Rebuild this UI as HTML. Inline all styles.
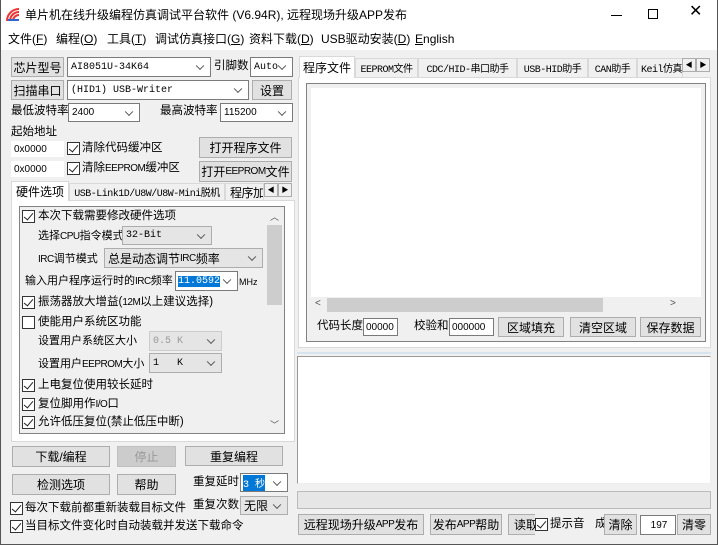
<!DOCTYPE html>
<html><head><meta charset="utf-8"><style>
*{box-sizing:border-box;margin:0;padding:0}
body{width:718px;height:545px;overflow:hidden;background:#f0f0f0;font-family:"Liberation Sans","Noto Sans CJK SC",sans-serif;font-size:11px;color:#000;position:relative}
.a{position:absolute;white-space:nowrap;line-height:1}
.m{font-size:11.5px}
.l{font-size:10px;letter-spacing:-0.5px;font-family:"Liberation Sans",sans-serif}
.btn{position:absolute;background:#e1e1e1;border:1px solid #adadad;display:flex;align-items:center;justify-content:center;white-space:nowrap;font-size:12px;overflow:hidden}
.cb{position:absolute;background:#fff;border:1px solid #7a7a7a;font-family:"Liberation Mono","Noto Sans CJK SC",monospace;font-size:10px;padding-left:3px;display:flex;align-items:center;white-space:nowrap}
.cb.g{background:#e5e5e5;border-color:#adadad}
.cb:after{content:"";position:absolute;right:7px;top:50%;width:5px;height:5px;border-right:1px solid #555;border-bottom:1px solid #555;transform:translateY(-70%) rotate(45deg)}
.ed{position:absolute;background:#fff;border:1px solid #7a7a7a;font-size:10px;padding-left:2px;display:flex;align-items:center;white-space:nowrap}
.ck{position:absolute;width:13px;height:13px;border:1px solid #333;background:#fff}
.ck.on:after{content:"";position:absolute;left:3px;top:0px;width:4px;height:8px;border-right:1.5px solid #222;border-bottom:1.5px solid #222;transform:rotate(40deg)}
.tab{position:absolute;border:1px solid #d9d9d9;border-bottom:none;background:#f0f0f0;font-size:10px;display:flex;align-items:center;justify-content:center;white-space:nowrap;overflow:hidden;font-family:"Liberation Mono","Noto Sans CJK SC",monospace;letter-spacing:-0.5px}
.tab.s{background:#fff;font-family:"Liberation Sans","Noto Sans CJK SC",sans-serif;font-size:12px;letter-spacing:0}
.ar{position:absolute;width:14px;height:14px;border:1px solid #adadad;background:#f0f0f0;font-size:7px;display:flex;align-items:center;justify-content:center}
</style></head><body>
<div class="a" style="left:0;top:0;width:718px;height:50px;background:#fff"></div>
<div class="a" style="left:0;top:0;width:1px;height:545px;background:#555"></div>
<div class="a" style="left:717px;top:0;width:1px;height:545px;background:#555"></div>
<div class="a" style="left:0;top:544px;width:718px;height:1px;background:#555"></div>
<svg class="a" style="left:6px;top:8px" width="14" height="14"><path d="M1 13 A12 12 0 0 1 13 1" stroke="#e33" stroke-width="2" fill="none"/><path d="M4 13 A9 9 0 0 1 13 4" stroke="#e33" stroke-width="2" fill="none"/><path d="M7 13 A6 6 0 0 1 13 7" stroke="#e33" stroke-width="2" fill="none"/><rect x="2" y="11" width="11" height="2" fill="#36c"/></svg>
<div class="a" style="left:25px;top:9px;font-size:12px">单片机在线升级编程仿真调试平台软件 (V6.94R), 远程现场升级APP发布</div>
<div class="a" style="left:611px;top:15px;width:11px;height:1px;background:#000"></div>
<div class="a" style="left:648px;top:9px;width:10px;height:10px;border:1px solid #000"></div>
<div class="a" style="left:689px;top:4px;font-size:16px">✕</div>
<div class="a" style="left:8px;top:33px;font-size:12px">文件(<u>F</u>)</div>
<div class="a" style="left:56px;top:33px;font-size:12px">编程(<u>O</u>)</div>
<div class="a" style="left:107px;top:33px;font-size:12px">工具(<u>T</u>)</div>
<div class="a" style="left:155px;top:33px;font-size:12px">调试仿真接口(<u>G</u>)</div>
<div class="a" style="left:249px;top:33px;font-size:12px">资料下载(<u>D</u>)</div>
<div class="a" style="left:321px;top:33px;font-size:12px">USB驱动安装(<u>D</u>)</div>
<div class="a" style="left:415px;top:33px;font-size:12px"><u>E</u>nglish</div>

<div class="btn" style="left:11px;top:57px;width:53px;height:20px">芯片型号</div>
<div class="cb" style="left:67px;top:57px;width:144px;height:20px">AI8051U-34K64</div>
<div class="a m" style="left:214px;top:61px">引脚数</div>
<div class="cb" style="left:250px;top:57px;width:43px;height:20px">Auto</div>
<div class="btn" style="left:11px;top:80px;width:53px;height:20px">扫描串口</div>
<div class="cb" style="left:67px;top:80px;width:182px;height:20px">(HID1) USB-Writer</div>
<div class="btn" style="left:252px;top:80px;width:40px;height:20px">设置</div>
<div class="a m" style="left:11px;top:106px">最低波特率</div>
<div class="cb" style="left:68px;top:103px;width:72px;height:19px;font-family:'Liberation Sans';font-size:10px">2400</div>
<div class="a m" style="left:160px;top:106px">最高波特率</div>
<div class="cb" style="left:220px;top:103px;width:73px;height:19px;font-family:'Liberation Sans';font-size:10px">115200</div>
<div class="a m" style="left:11px;top:127px">起始地址</div>
<div class="ed" style="left:11px;top:141px;width:53px;height:16px;border-color:#fff">0x0000</div>
<div class="ck on" style="left:67px;top:142px"></div><div class="a m" style="left:82px;top:143px">清除代码缓冲区</div>
<div class="btn" style="left:199px;top:137px;width:93px;height:21px">打开程序文件</div>
<div class="ed" style="left:11px;top:161px;width:53px;height:16px;border-color:#fff">0x0000</div>
<div class="ck on" style="left:67px;top:162px"></div><div class="a m" style="left:82px;top:163px">清除<span class="l">EEPROM</span>缓冲区</div>
<div class="btn" style="left:199px;top:161px;width:93px;height:21px">打开<span class="l">EEPROM</span>文件</div>

<div class="a" style="left:11px;top:200px;width:284px;height:242px;background:#fff;border:1px solid #d9d9d9"></div>
<div class="tab s" style="left:11px;top:181px;width:58px;height:20px">硬件选项</div>
<div class="tab" style="left:69px;top:183px;width:156px;height:17px">USB-Link1D/U8W/U8W-Mini脱机</div>
<div class="tab" style="left:225px;top:183px;width:39px;height:17px;font-family:'Liberation Sans','Noto Sans CJK SC';font-size:12px;justify-content:flex-start;padding-left:4px">程序加载</div>
<div class="ar" style="left:264px;top:183px">◀</div><div class="ar" style="left:278px;top:183px">▶</div>
<div class="a" style="left:19px;top:206px;width:266px;height:228px;background:#f0f0f0;border:1px solid #828282"></div>
<div class="a" style="left:267px;top:207px;width:17px;height:226px;background:#f0f0f0"></div>
<div class="a" style="left:267px;top:225px;width:15px;height:80px;background:#cdcdcd"></div>
<div class="a" style="left:270px;top:213px;font-size:9px;color:#555">︿</div>
<div class="a" style="left:270px;top:421px;font-size:9px;color:#555">﹀</div>
<div class="ck on" style="left:22px;top:210px"></div><div class="a m" style="left:38px;top:211px">本次下载需要修改硬件选项</div>
<div class="a" style="left:38px;top:231px">选择<span class="l">CPU</span>指令模式</div>
<div class="cb g" style="left:122px;top:226px;width:90px;height:19px">32-Bit</div>
<div class="a" style="left:38px;top:254px"><span class="l">IRC</span>调节模式</div>
<div class="cb g" style="left:104px;top:248px;width:159px;height:20px;font-family:'Liberation Sans','Noto Sans CJK SC';font-size:12px">总是动态调节<span class="l">IRC</span>频率</div>
<div class="a" style="left:25px;top:276px">输入用户程序运行时的<span class="l">IRC</span>频率</div>
<div class="cb" style="left:175px;top:271px;width:63px;height:20px;padding-left:2px"><span style="background:#0078d7;color:#fff">11.0592</span></div>
<div class="a" style="left:239px;top:278px;font-size:9px">MHz</div>
<div class="ck on" style="left:22px;top:296px"></div><div class="a m" style="left:38px;top:297px">振荡器放大增益(<span class="l">12M</span>以上建议选择)</div>
<div class="ck" style="left:22px;top:316px"></div><div class="a m" style="left:38px;top:317px">使能用户系统区功能</div>
<div class="a" style="left:38px;top:336px">设置用户系统区大小</div>
<div class="cb g" style="left:149px;top:331px;width:73px;height:20px;color:#999;border-color:#ccc">0.5 K</div>
<div class="a" style="left:38px;top:359px">设置用户<span class="l">EEPROM</span>大小</div>
<div class="cb g" style="left:149px;top:353px;width:73px;height:20px">1&nbsp;&nbsp;&nbsp;K</div>
<div class="ck on" style="left:22px;top:379px"></div><div class="a m" style="left:38px;top:380px">上电复位使用较长延时</div>
<div class="ck on" style="left:22px;top:398px"></div><div class="a m" style="left:38px;top:399px">复位脚用作<span class="l">I/O</span>口</div>
<div class="ck on" style="left:22px;top:416px"></div><div class="a m" style="left:38px;top:417px">允许低压复位(禁止低压中断)</div>

<div class="btn" style="left:12px;top:446px;width:98px;height:21px">下载/编程</div>
<div class="btn" style="left:117px;top:446px;width:59px;height:21px;background:#ccc;color:#999;border-color:#bfbfbf">停止</div>
<div class="btn" style="left:185px;top:446px;width:98px;height:20px">重复编程</div>
<div class="btn" style="left:12px;top:474px;width:98px;height:21px">检测选项</div>
<div class="btn" style="left:117px;top:474px;width:59px;height:21px">帮助</div>
<div class="a m" style="left:193px;top:477px">重复延时</div>
<div class="cb" style="left:240px;top:473px;width:48px;height:19px;padding-left:2px"><span style="background:#0078d7;color:#fff">3 秒</span></div>
<div class="a m" style="left:193px;top:500px">重复次数</div>
<div class="cb g" style="left:240px;top:496px;width:48px;height:19px;font-family:'Liberation Sans','Noto Sans CJK SC';font-size:12px">无限</div>
<div class="ck on" style="left:10px;top:502px"></div><div class="a m" style="left:25px;top:503px">每次下载前都重新装载目标文件</div>
<div class="ck on" style="left:10px;top:520px"></div><div class="a m" style="left:25px;top:521px">当目标文件变化时自动装载并发送下载命令</div>

<div class="a" style="left:298px;top:77px;width:413px;height:271px;background:#fff;border:1px solid #d9d9d9"></div>
<div class="tab s" style="left:299px;top:56px;width:56px;height:22px">程序文件</div>
<div class="tab" style="left:355px;top:58px;width:63px;height:19px">EEPROM文件</div>
<div class="tab" style="left:418px;top:58px;width:99px;height:19px">CDC/HID-串口助手</div>
<div class="tab" style="left:517px;top:58px;width:71px;height:19px">USB-HID助手</div>
<div class="tab" style="left:588px;top:58px;width:49px;height:19px">CAN助手</div>
<div class="tab" style="left:637px;top:58px;width:46px;height:19px;justify-content:flex-start;padding-left:3px">Keil仿真</div>
<div class="ar" style="left:682px;top:58px">◀</div><div class="ar" style="left:696px;top:58px">▶</div>
<div class="a" style="left:306px;top:83px;width:400px;height:259px;background:#f0f0f0;border:1px solid #828282"></div>
<div class="a" style="left:311px;top:88px;width:390px;height:225px;background:#fff"></div>
<div class="a" style="left:311px;top:297px;width:390px;height:16px;background:#f0f0f0"></div>
<div class="a" style="left:327px;top:298px;width:276px;height:14px;background:#cdcdcd"></div>
<div class="a" style="left:315px;top:299px;font-size:10px;color:#555">&lt;</div>
<div class="a" style="left:670px;top:299px;font-size:10px;color:#555">&gt;</div>
<div class="a m" style="left:317px;top:321px">代码长度</div>
<div class="ed" style="left:363px;top:318px;width:35px;height:18px">00000</div>
<div class="a m" style="left:414px;top:321px">校验和</div>
<div class="ed" style="left:449px;top:318px;width:45px;height:18px">000000</div>
<div class="btn" style="left:498px;top:317px;width:66px;height:20px">区域填充</div>
<div class="btn" style="left:570px;top:317px;width:66px;height:20px">清空区域</div>
<div class="btn" style="left:640px;top:317px;width:61px;height:20px">保存数据</div>
<div class="a" style="left:297px;top:352px;width:414px;height:2px;background:#d5e4ef"></div>
<div class="a" style="left:297px;top:356px;width:414px;height:128px;background:#fff;border:1px solid #999;border-right-color:#eee;border-bottom-color:#eee"></div>
<div class="a" style="left:297px;top:491px;width:414px;height:18px;background:#e6e6e6;border:1px solid #bcbcbc"></div>
<div class="btn" style="left:298px;top:514px;width:126px;height:21px">远程现场升级<span class="l">APP</span>发布</div>
<div class="btn" style="left:430px;top:514px;width:72px;height:21px">发布<span class="l">APP</span>帮助</div>
<div class="btn" style="left:508px;top:514px;width:40px;height:21px;justify-content:flex-start;padding-left:5px">读取</div>
<div class="a" style="left:535px;top:513px;width:48px;height:23px;background:#f0f0f0"></div>
<div class="ck on" style="left:535px;top:518px"></div><div class="a m" style="left:550px;top:519px">提示音</div>
<div class="a m" style="left:595px;top:519px">成</div>
<div class="btn" style="left:604px;top:514px;width:33px;height:21px">清除</div>
<div class="ed" style="left:640px;top:515px;width:36px;height:20px;justify-content:center">197</div>
<div class="btn" style="left:677px;top:514px;width:34px;height:21px">清零</div>
</body></html>
